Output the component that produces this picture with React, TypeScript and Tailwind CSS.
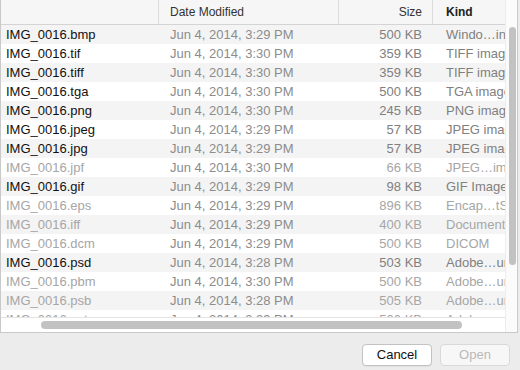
type Row = {
  name: string
  date: string
  size: string
  kind: string
  enabled: boolean
}

const rows: Row[] = [
  { name: 'IMG_0016.bmp', date: 'Jun 4, 2014, 3:29 PM', size: '500 KB', kind: 'Windo…indows bitmap', enabled: true },
  { name: 'IMG_0016.tif', date: 'Jun 4, 2014, 3:30 PM', size: '359 KB', kind: 'TIFF image', enabled: true },
  { name: 'IMG_0016.tiff', date: 'Jun 4, 2014, 3:30 PM', size: '359 KB', kind: 'TIFF image', enabled: true },
  { name: 'IMG_0016.tga', date: 'Jun 4, 2014, 3:30 PM', size: '500 KB', kind: 'TGA image', enabled: true },
  { name: 'IMG_0016.png', date: 'Jun 4, 2014, 3:30 PM', size: '245 KB', kind: 'PNG image', enabled: true },
  { name: 'IMG_0016.jpeg', date: 'Jun 4, 2014, 3:29 PM', size: '57 KB', kind: 'JPEG image', enabled: true },
  { name: 'IMG_0016.jpg', date: 'Jun 4, 2014, 3:29 PM', size: '57 KB', kind: 'JPEG image', enabled: true },
  { name: 'IMG_0016.jpf', date: 'Jun 4, 2014, 3:30 PM', size: '66 KB', kind: 'JPEG…image', enabled: false },
  { name: 'IMG_0016.gif', date: 'Jun 4, 2014, 3:29 PM', size: '98 KB', kind: 'GIF Image', enabled: true },
  { name: 'IMG_0016.eps', date: 'Jun 4, 2014, 3:29 PM', size: '896 KB', kind: 'Encap…tScript', enabled: false },
  { name: 'IMG_0016.iff', date: 'Jun 4, 2014, 3:29 PM', size: '400 KB', kind: 'Document', enabled: false },
  { name: 'IMG_0016.dcm', date: 'Jun 4, 2014, 3:29 PM', size: '500 KB', kind: 'DICOM', enabled: false },
  { name: 'IMG_0016.psd', date: 'Jun 4, 2014, 3:28 PM', size: '503 KB', kind: 'Adobe…ument', enabled: true },
  { name: 'IMG_0016.pbm', date: 'Jun 4, 2014, 3:30 PM', size: '500 KB', kind: 'Adobe…ument', enabled: false },
  { name: 'IMG_0016.psb', date: 'Jun 4, 2014, 3:28 PM', size: '505 KB', kind: 'Adobe…ument', enabled: false },
  { name: 'IMG_0016.pct', date: 'Jun 4, 2014, 3:29 PM', size: '500 KB', kind: 'Adobe…ument', enabled: false },
]

export default function App() {
  return (
    <div className="w-[520px] h-[370px] bg-[#ececec] flex flex-col font-['Liberation_Sans','Helvetica',sans-serif] text-[12px] overflow-hidden">
      {/* file browser panel */}
      <div className="w-[518px] h-[333px] flex border-l border-r border-b border-[#c9c9c9] bg-white">
        <div className="w-[504px] flex flex-col">
          {/* column header */}
          <div className="h-[25px] shrink-0 flex bg-[#f6f6f6] border-b border-[#d4d4d4] text-[#333]">
            <div className="w-[157px]" />
            <div className="w-[180px] border-l border-[#dcdcdc] pl-[11px] flex items-center">Date Modified</div>
            <div className="w-[94px] border-l border-[#dcdcdc] pr-[10px] flex items-center justify-end">Size</div>
            <div className="flex-1 border-l border-[#dcdcdc] pl-[13px] flex items-center font-bold text-[#222]">Kind</div>
          </div>

          {/* rows */}
          <div className="flex-1 overflow-hidden text-[13px]">
            {rows.map((row, i) => (
              <div
                key={row.name}
                className={`h-[19px] flex items-center whitespace-nowrap ${i % 2 === 0 ? 'bg-[#f4f4f4]' : 'bg-white'}`}
              >
                <div className={`w-[157px] pl-[5px] ${row.enabled ? 'text-[#111]' : 'text-[#a6a6a6]'}`}>
                  {row.name}
                </div>
                <div className="w-[180px] pl-[12px] text-[#8c8c8c]">{row.date}</div>
                <div className={`w-[94px] pr-[10px] text-right ${row.enabled ? 'text-[#808080]' : 'text-[#a6a6a6]'}`}>
                  {row.size}
                </div>
                <div className={`flex-1 pl-[14px] overflow-hidden ${row.enabled ? 'text-[#808080]' : 'text-[#a6a6a6]'}`}>
                  {row.kind}
                </div>
              </div>
            ))}
          </div>

          {/* horizontal scroller */}
          <div className="h-[15px] shrink-0 border-t border-[#e4e4e4] bg-white pl-[40px] pt-[3px]">
            <div className="w-[421px] h-[8px] rounded-full bg-[#c2c2c2]" />
          </div>
        </div>

        {/* vertical scroller */}
        <div className="w-[12px] border-l border-[#ededed] bg-[#fbfbfb] pt-[27px] pl-[3px]">
          <div className="w-[7px] h-[238px] rounded-full bg-[#c2c2c2]" />
        </div>
      </div>

      {/* buttons */}
      <div className="flex justify-end gap-[8px] pt-[11px] pr-[10px]">
        <button className="w-[70px] h-[22px] rounded-[4px] border border-[#c3c3c3] bg-white text-[13px] text-[#111] shadow-[0_1px_0_rgba(0,0,0,0.05)]">
          Cancel
        </button>
        <button className="w-[70px] h-[22px] rounded-[4px] border border-[#d9d9d9] bg-[#f7f7f7] text-[13px] text-[#b9b9b9]">
          Open
        </button>
      </div>
    </div>
  )
}
